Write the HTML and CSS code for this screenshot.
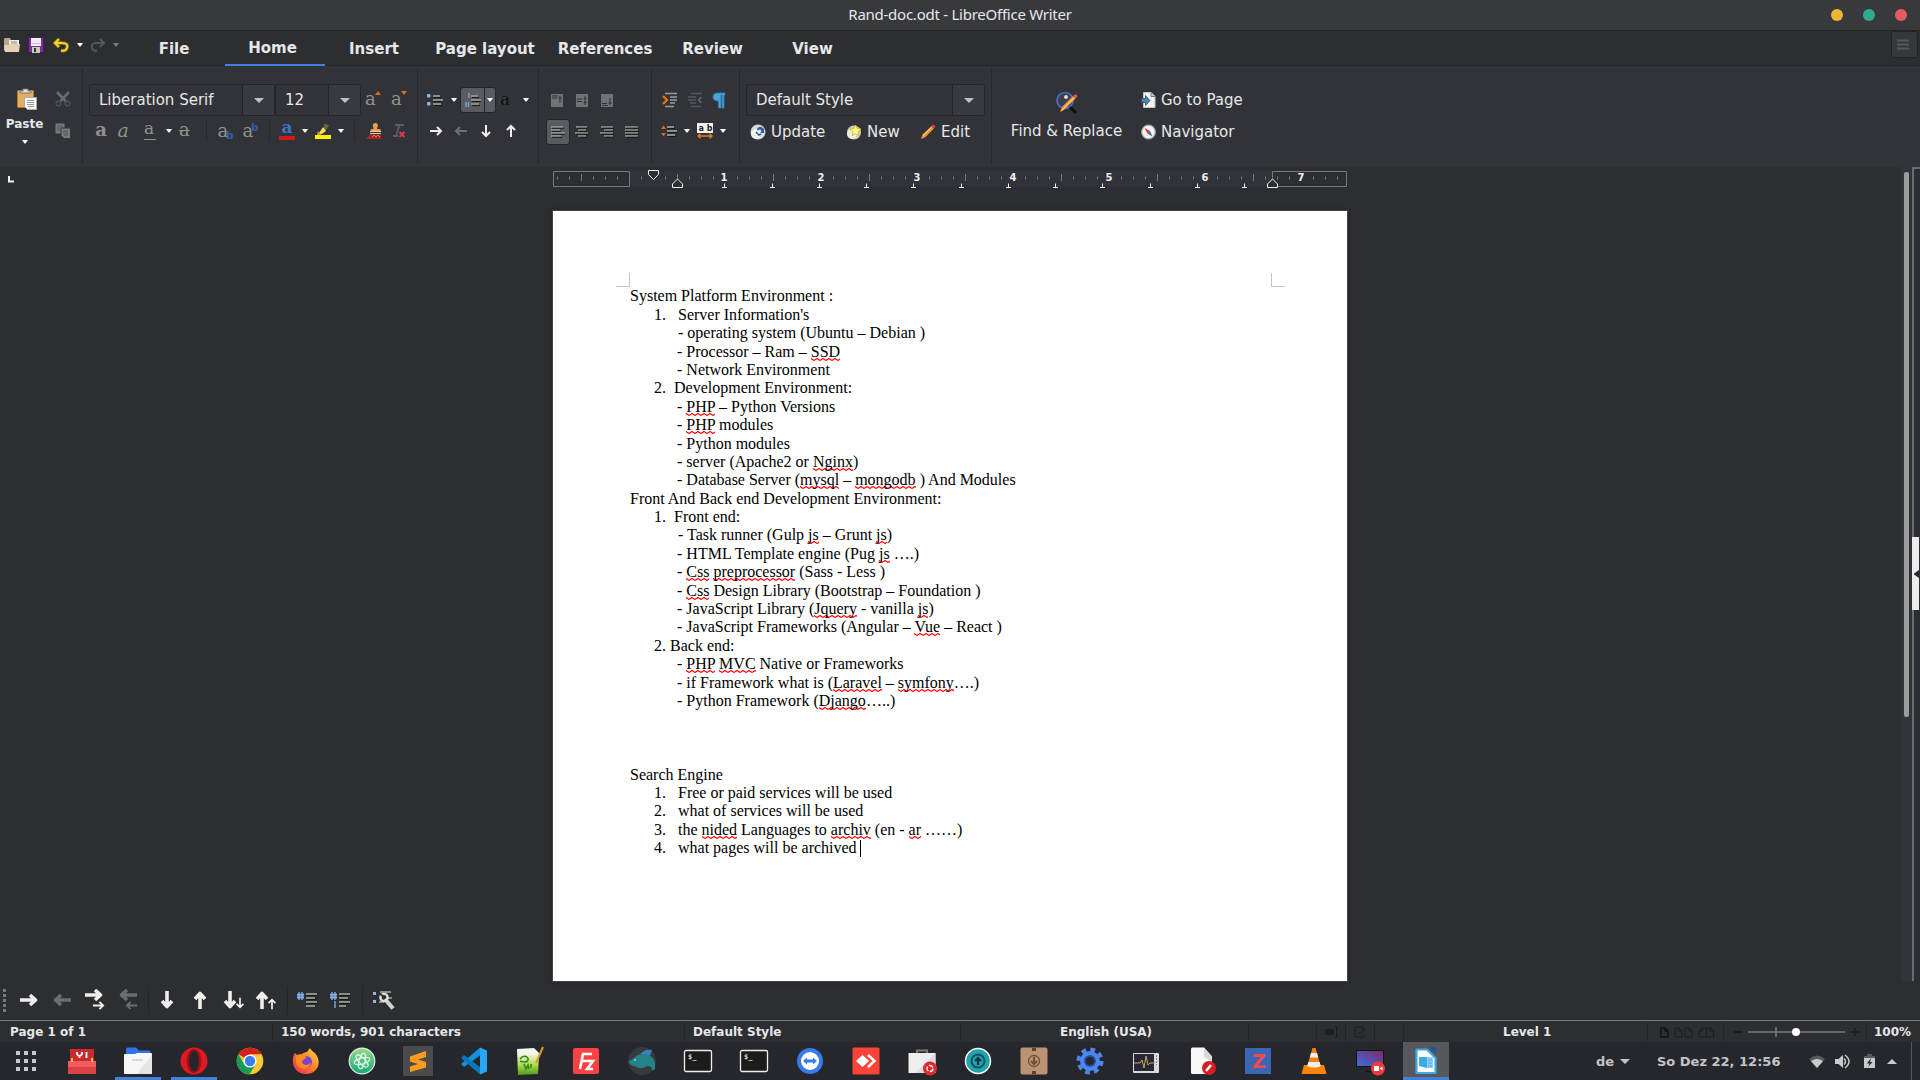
FILE: index.html
```html
<!DOCTYPE html>
<html lang="en">
<head>
<meta charset="utf-8">
<title>Rand-doc.odt - LibreOffice Writer</title>
<link rel="stylesheet" href="styles.css">
</head>
<body>
<svg class="defs" aria-hidden="true">
  <defs>
    <linearGradient id="wallpaper" x1="0" y1="1" x2="1" y2="0"><stop offset="0" stop-color="#3c6be0"/><stop offset="1" stop-color="#7d2a66"/></linearGradient>
    <linearGradient id="fox" x1="1" y1="0" x2="0" y2="1"><stop offset="0" stop-color="#ffe14a"/><stop offset=".5" stop-color="#ff7a2a"/><stop offset="1" stop-color="#e8255c"/></linearGradient>
    <linearGradient id="atomg" x1="0" y1="0" x2="0" y2="1"><stop offset="0" stop-color="#9bd98c"/><stop offset="1" stop-color="#17a877"/></linearGradient>
    <linearGradient id="grass" x1="0" y1="0" x2="0" y2="1"><stop offset=".2" stop-color="#f4f6f0"/><stop offset=".6" stop-color="#b7dc4e"/><stop offset="1" stop-color="#4c9b1e"/></linearGradient>
  </defs>
  <symbol id="caret" viewBox="0 0 6 4"><path d="M0 0h6L3.5 3.5h-1z" fill="#fff"/></symbol>
  <symbol id="caret-dim" viewBox="0 0 6 4"><path d="M0 0h6L3.5 3.5h-1z" fill="#77797c"/></symbol>
  <symbol id="arrow" viewBox="0 0 14 14"><path d="M1 7h11M8 3l4 4-4 4" fill="none" stroke="#eeeeec" stroke-width="2"/></symbol>
  <symbol id="bigarrow" viewBox="0 0 20 20"><path d="M1 10h15M11 5l5.500 5-5.500 5" fill="none" stroke="#eeeeec" stroke-width="3.600" stroke-linejoin="round"/></symbol>
  <symbol id="lines" viewBox="0 0 11 14"><path d="M1 3h7M1 7h10M1 11h8" stroke="#8b8f86" stroke-width="2"/><path d="M2 4.500h7M2 8.500h9M2 12.500h8" stroke="#17181a"/></symbol>
</svg>

<header class="titlebar">
  <span class="title-text">Rand-doc.odt - LibreOffice Writer</span>
  <div class="win-buttons"><i class="dot amber"></i><i class="dot green"></i><i class="dot red"></i></div>
</header>

<nav class="tabbar">
  <div class="quick">
    <svg width="18" height="16" viewBox="0 0 18 16"><path d="M1 2l1-1h5l1 2h8v11H1z" fill="#b9a68a"/><path d="M6 3h10v7H6z" fill="#eee"/><path d="M8 5h6M8 7h6" stroke="#888"/><path d="M1 8h5l1-1h10l-1 8H2z" fill="#e3d2b4"/></svg>
    <svg width="16" height="16" viewBox="0 0 16 16"><rect x=".5" y=".5" width="15" height="15" fill="#75348f" stroke="#4a1760"/><path d="M3 1h10v8H3z" fill="#f1edf3"/><path d="M4 10h8v6H4z" fill="#c5cbbf"/><path d="M6 11h2v4H6z" fill="#333"/><path d="M4 6.500h8" stroke="#c9b7d2"/></svg>
    <svg width="16" height="16" viewBox="0 0 16 16"><path d="M6 2L2 6l4 4M2 6h7c5 0 6 2 5 5s-4 3-6 2.500" fill="none" stroke="#8a6f00" stroke-width="3.500"/><path d="M6 2L2 6l4 4M2 6h7c5 0 6 2 5 5s-4 3-6 2.500" fill="none" stroke="#f3d530" stroke-width="1.900"/></svg>
    <svg width="6" height="4"><use href="#caret"/></svg>
    <svg width="16" height="16" viewBox="0 0 16 16"><path d="M10 2l4 4-4 4M14 6H7C2 6 1 8 2 11s3 3 5 2.500" fill="none" stroke="#55575a" stroke-width="2"/></svg>
    <svg width="6" height="4"><use href="#caret-dim"/></svg>
  </div>
  <a class="tab">File</a><a class="tab active">Home</a><a class="tab">Insert</a><a class="tab wide">Page layout</a><a class="tab wide">References</a><a class="tab review">Review</a><a class="tab view">View</a>
  <button class="hamburger"><svg width="12" height="11" viewBox="0 0 12 11"><path d="M0 1.500h12M0 5.500h12M0 9.500h12" stroke="#58585a" stroke-width="2"/></svg></button>
</nav>

<section class="ribbon">
  <div class="group clipboard">
    <div class="paste">
      <svg width="22" height="22" viewBox="0 0 22 22"><rect x="1.500" y="2.500" width="16" height="17" rx="1" fill="#e4ae60" stroke="#b27c2f"/><path d="M4 5h11V3h-3V1H7v2H4z" fill="#e3e5e1" stroke="#777"/><path d="M8.500 9.500h12v12h-9l-3-3z" fill="#fafafa" stroke="#aaa"/><path d="M11 12.500h7M11 14.500h7M11 16.500h7M12 18.500h6" stroke="#999"/></svg>
      <span>Paste</span>
      <svg width="6" height="4"><use href="#caret"/></svg>
    </div>
    <div class="clip-side">
      <svg width="16" height="16" viewBox="0 0 16 16"><path d="M2 1l8.500 9M14 1L5.500 10" stroke="#696b6e" stroke-width="2.600"/><circle cx="3.500" cy="12.500" r="2.300" fill="none" stroke="#505255" stroke-width="1.400"/><circle cx="12.500" cy="12.500" r="2.300" fill="none" stroke="#505255" stroke-width="1.400"/></svg>
      <svg width="16" height="16" viewBox="0 0 16 16"><path d="M.5.5h9v10h-9z" fill="#77797b"/><path d="M6 5h9.500v10.500H9L6 12.500z" fill="#77797b" stroke="#37383c"/><path d="M2 3h6M2 5h3M2 7h3M8 8h5M8 10h5M9 12h4" stroke="#55575a"/></svg>
    </div>
  </div>

  <div class="group fonts">
    <div class="row font-top">
      <div class="combo font-name"><span>Liberation Serif</span><b><i></i></b></div>
      <div class="combo font-size"><span>12</span><b><i></i></b></div>
      <span class="glyph">a<svg class="sup" width="6" height="4" viewBox="0 0 6 4"><path d="M0 4h6L3 0z" fill="#e06a14"/></svg></span>
      <span class="glyph">a<svg class="sup" width="6" height="4" viewBox="0 0 6 4"><path d="M0 0h6L3 4z" fill="#e06a14"/></svg></span>
    </div>
    <div class="row font-bottom">
      <span class="glyph heavy">a</span><span class="glyph slant">a</span><span class="glyph under">a</span>
      <svg width="6" height="4"><use href="#caret"/></svg>
      <span class="glyph strike">a</span><i class="sep"></i>
      <span class="glyph">a<small class="low">b</small></span><span class="glyph">a<small class="high">b</small></span><i class="sep"></i>
      <span class="glyph color-a">a</span>
      <svg width="6" height="4"><use href="#caret"/></svg>
      <svg width="16" height="16" viewBox="0 0 16 16"><path d="M9 1l5 1-2 4-3 2z" fill="#6b6a3b"/><path d="M8 4l3 4-4 3-4 .5z" fill="#f2dc62"/><path d="M3 8l3 4H2z" fill="#bda92a"/><path d="M0 12h16v4H0z" fill="#fff200"/></svg>
      <svg width="6" height="4"><use href="#caret"/></svg><i class="sep"></i>
      <svg width="16" height="16" viewBox="0 0 16 16"><path d="M9.500 0a2.500 2.500 0 012.500 2.500c0 1-1 1.500-1 3.500h3l1.500 3H4l1-3h2.500c0-2-.8-2.500-.8-3.500A2.700 2.700 0 019.500 0z" fill="#e5a04c"/><path d="M4 8.500h11M4 10.500h11" stroke="#e8c9a0"/><path d="M4 11.500h11V16H0z" fill="#b32222"/><path d="M6 14l2-2 2 2 2-2 2 2" fill="none" stroke="#e58a8a" stroke-width=".8"/></svg>
      <svg width="16" height="16" viewBox="0 0 16 16"><path d="M4 2h9M8.500 2L5 13M2 13h5" stroke="#5c5e61" stroke-width="1.800"/><path d="M8.500 9l5 5M13.500 9l-5 5" stroke="#dc3a4c" stroke-width="1.900"/></svg>
    </div>
  </div>

  <div class="group lists">
    <div class="row list-top">
      <svg width="16" height="14" viewBox="0 0 16 14"><rect y="1" width="3.500" height="3.500" rx="1" fill="#8db7ea"/><rect y="9" width="3.500" height="3.500" rx="1" fill="#8db7ea"/><use href="#lines" x="5" width="11" height="14"/></svg>
      <svg width="6" height="4"><use href="#caret"/></svg>
      <div class="split"><span><svg width="16" height="14" viewBox="0 0 16 14"><path d="M4 0v5M1 9v5M3.500 9v5" stroke="#79a5de" stroke-width="1.400"/><use href="#lines" x="5" width="11" height="14"/></svg></span><span><svg width="6" height="4"><use href="#caret"/></svg></span></div>
      <span class="glyph dark">a</span>
      <svg width="6" height="4"><use href="#caret"/></svg>
    </div>
    <div class="row list-bottom">
      <svg width="14" height="14"><use href="#arrow"/></svg><svg class="west dim" width="14" height="14"><use href="#arrow"/></svg><svg class="south" width="14" height="14"><use href="#arrow"/></svg><svg class="north" width="14" height="14"><use href="#arrow"/></svg>
    </div>
  </div>

  <div class="group align">
    <div class="row quad">
      <svg width="12" height="13" viewBox="0 0 12 13"><path d="M0 0h12v13H0z" fill="#707275"/><path d="M1 2h6M1 4h5M9 3v6M7.500 4.500L9 2.500l1.500 2" fill="none" stroke="#303236"/></svg>
      <svg width="12" height="13" viewBox="0 0 12 13"><path d="M0 0h12v13H0z" fill="#707275"/><path d="M1 5h5M1 7.500h5M9 2v9M7.500 4.500h3M7.500 8.500h3" fill="none" stroke="#303236"/></svg>
      <svg width="12" height="13" viewBox="0 0 12 13"><path d="M0 0h12v13H0z" fill="#707275"/><path d="M1 9.500h5M1 11.500h6M9 4v6M7.500 8.500L9 10.500l1.500-2" fill="none" stroke="#303236"/></svg>
    </div>
    <div class="row quad">
      <span class="pressed"><svg width="14" height="13" viewBox="0 0 14 13"><path d="M0 1h12M0 4h9M0 7h14M0 10h10" stroke="#a0a39b" stroke-width="1.500"/><path d="M1 2.300h12M1 5.300h9M1 8.300h13M1 11.300h10" stroke="#17181a"/></svg></span>
      <svg width="14" height="13" viewBox="0 0 14 13"><path d="M1 1h11M3 4h8M0 7h13M3 10h8" stroke="#9a9d95" stroke-width="1.500"/><path d="M2 2.300h11M4 5.300h8M1 8.300h13M4 11.300h8" stroke="#17181a"/></svg>
      <svg width="14" height="13" viewBox="0 0 14 13"><path d="M1 1h12M4 4h9M0 7h13M4 10h9" stroke="#9a9d95" stroke-width="1.500"/><path d="M2 2.300h12M5 5.300h9M1 8.300h13M5 11.300h9" stroke="#17181a"/></svg>
      <svg width="14" height="13" viewBox="0 0 14 13"><path d="M0 1h13M0 4h13M0 7h13M0 10h13" stroke="#9a9d95" stroke-width="1.500"/><path d="M1 2.300h13M1 5.300h13M1 8.300h13M1 11.300h13" stroke="#17181a"/></svg>
    </div>
  </div>

  <div class="group indent">
    <div class="row indent-top">
      <svg width="16" height="16" viewBox="0 0 16 16"><path d="M3 1.500h12M8 5h7M8 8h7M8 11h5M3 14.500h9" stroke="#9a9d95" stroke-width="1.500"/><path d="M1 4l4 4-4 4" fill="none" stroke="#e8700f" stroke-width="2.400"/></svg>
      <svg width="16" height="16" viewBox="0 0 16 16"><path d="M4 1.500h11M1 5h8M1 8h8M3 11h6M4 14.500h10" stroke="#56585b" stroke-width="1.500"/><path d="M14.500 5L11.500 8l3 3" fill="none" stroke="#696b6e" stroke-width="1.500"/></svg>
      <svg width="14" height="17" viewBox="0 0 14 17"><path d="M5 1h8v2h-1v13h-2V3H9v13H6.500V9C3 9 1 7.500 1 5s2-4 4-4z" fill="#4ba3d8" stroke="#2f7db5" stroke-width=".9"/></svg>
    </div>
    <div class="row indent-bottom">
      <svg width="16" height="14" viewBox="0 0 16 14"><path d="M0 5h5L2.500 1.500zM0 9h5L2.500 12.500z" fill="#d86a1c"/><use href="#lines" x="5" width="11" height="14"/></svg>
      <svg width="6" height="4"><use href="#caret"/></svg>
      <svg width="16" height="16" viewBox="0 0 16 16"><path d="M0 0h16v10H0z" fill="#f4f4f4"/><text x="1.500" y="8" class="ab">a b</text><path d="M1 13h14M3.500 10.800L1 13l2.500 2.200M12.500 10.800L15 13l-2.500 2.200" fill="none" stroke="#e37b1f" stroke-width="1.500"/></svg>
      <svg width="6" height="4"><use href="#caret"/></svg>
    </div>
  </div>

  <div class="group styles">
    <div class="combo style-name"><span>Default Style</span><b><i></i></b></div>
    <div class="row style-row">
      <span class="btn"><svg width="16" height="16" viewBox="0 0 16 16"><circle cx="8" cy="8" r="7.500" fill="#d8dad5"/><circle cx="6" cy="10" r="5" fill="#f2f3f0"/><path d="M7 5c2-3 5-3 6 0l1-1v5h-4l1.500-1.500C11 5 9 5 8 7z" fill="#2a5aa8"/><path d="M6 8l3 3 2-1" fill="none" stroke="#2a5aa8" stroke-width="1.500"/></svg>Update</span>
      <span class="btn"><svg width="16" height="16" viewBox="0 0 16 16"><circle cx="8" cy="8.500" r="7" fill="#c9cbc5"/><circle cx="6" cy="10" r="5" fill="#ecedea"/><path d="M9.500 1l1.700 3.500 3.800.5-2.800 2.700.7 3.800-3.400-1.800-3.400 1.800.7-3.800L4 5l3.800-.5z" fill="#fff6a0" stroke="#dfc400"/></svg>New</span>
      <span class="btn"><svg width="16" height="16" viewBox="0 0 16 16"><path d="M1 15l1.500-4.500L11.500 2l2.500 2.500L5 13.500z" fill="#ef9537"/><path d="M3 12L12 3" stroke="#ffd08c"/><path d="M11 2.500l2-2 2.500 2-2 2.500z" fill="#e2414c"/></svg>Edit</span>
    </div>
  </div>

  <div class="find">
    <svg width="22" height="24" viewBox="0 0 22 24"><circle cx="9" cy="9.500" r="8" fill="#3c4048" stroke="#4a6fc4" stroke-width="1.600"/><circle cx="10" cy="6" r="2" fill="#d5dae5"/><path d="M14 16l6 6" stroke="#0e0f10" stroke-width="3"/><path d="M4 21l2-5L17 5l2.500 2.500L8 19z" fill="#f09a3b"/><path d="M6 19L18 7" stroke="#ffd399"/><path d="M17 5l3-2 1.500 2-2 3z" fill="#e5525a"/></svg>
    <span>Find &amp; Replace</span>
  </div>
  <div class="goto">
    <span class="btn"><svg width="15" height="16" viewBox="0 0 15 16"><path d="M2.500.5H10l4 4v11H2.500z" fill="#f3f4f1" stroke="#c5c7c2"/><path d="M10 .5v4h4" fill="#ccc" stroke="#777"/><path d="M.5 6.500h4v-3L9 8.500l-4.500 5v-3h-4z" fill="#4c86ab" stroke="#24506f" stroke-width=".8"/></svg>Go to Page</span>
    <span class="btn"><svg width="15" height="16" viewBox="0 0 15 16"><circle cx="7.500" cy="8" r="6.800" fill="#f3f3f1" stroke="#aaaca7" stroke-width="1.200"/><path d="M3.500 4l5.500 3-2.500 2.500z" fill="#dc2c2c"/><path d="M11.500 12.500L9 7 6.500 9.500z" fill="#53659b"/></svg>Navigator</span>
  </div>
</section>

<main class="workspace">
  <div class="canvas">
    <svg class="ruler" width="1901" height="24" viewBox="0 167 1901 24">
      <path d="M9 176v5.500H14" fill="none" stroke="#f0f0f0" stroke-width="2"/>
      <path d="M630 171h642v16H630z" fill="#323338"/>
      <path d="M553.500 171.500h76v15h-76zM1272.500 171.500h74v15h-74z" fill="none" stroke="#77797d"/>
      <g fill="none" stroke="#77797d">
        <path d="M557 178h61" stroke-width="3" stroke-dasharray="1 11"/>
        <path d="M641 178h625" stroke-width="3" stroke-dasharray="1 11"/>
        <path d="M1277 178h62" stroke-width="3" stroke-dasharray="1 11"/>
        <path d="M581 177.500h1M677 177.500h1M773 177.500h1M869 177.500h1M965 177.500h1M1061 177.500h1M1157 177.500h1M1253 177.500h1" stroke-width="7"/>
      </g>
      <path d="M716 173h16v12h-16zM812 173h16v12h-16zM908 173h16v12h-16zM1004 173h16v12h-16zM1100 173h16v12h-16zM1196 173h16v12h-16z" fill="#323338"/>
      <path d="M1293 173h16v12h-16z" fill="#2d2e32"/>
      <g class="ruler-num"><text x="724" y="181">1</text><text x="821" y="181">2</text><text x="917" y="181">3</text><text x="1013" y="181">4</text><text x="1109" y="181">5</text><text x="1205" y="181">6</text><text x="1301" y="181">7</text></g>
      <path d="M722 187.500h5m-2.500 0v-4M770 187.500h5m-2.500 0v-4M817 187.500h5m-2.500 0v-4M864 187.500h5m-2.500 0v-4M911 187.500h5m-2.500 0v-4M959 187.500h5m-2.500 0v-4M1006 187.500h5m-2.500 0v-4M1053 187.500h5m-2.500 0v-4M1100 187.500h5m-2.500 0v-4M1148 187.500h5m-2.500 0v-4M1195 187.500h5m-2.500 0v-4M1242 187.500h5m-2.500 0v-4" stroke="#f0f0f0" fill="none"/>
      <path d="M648.500 170.500h10v4l-5 5-5-5zM672.500 187.500h10v-3.500l-5-5-5 5zM1267.500 187.500h10v-3.500l-5-5-5 5z" fill="#2d2e32" stroke="#f0f0f0"/>
    </svg>
    <article class="page">
      <div class="corners"><i class="c-left"></i><i class="c-right"></i></div>
      <p>System Platform Environment :</p>
      <p class="n"><b>1.</b>Server Information's</p>
      <p class="d first">- operating system (Ubuntu – Debian )</p>
      <p class="d">- Processor – Ram – <u>SSD</u></p>
      <p class="d">- Network Environment</p>
      <p class="n mid"><b>2.</b>Development Environment:</p>
      <p class="d">- <u>PHP</u> – Python Versions</p>
      <p class="d">- <u>PHP</u> modules</p>
      <p class="d">- Python modules</p>
      <p class="d">- server (Apache2 or <u>Nginx</u>)</p>
      <p class="d">- Database Server (<u>mysql</u> – <u>mongodb</u> ) And Modules</p>
      <p>Front And Back end Development Environment:</p>
      <p class="n mid"><b>1.</b>Front end:</p>
      <p class="d first">- Task runner (Gulp <u>js</u> – Grunt <u>js</u>)</p>
      <p class="d">- HTML Template engine (Pug <u>js</u> ….)</p>
      <p class="d">- <u>Css</u> <u>preprocessor</u> (Sass - Less )</p>
      <p class="d">- <u>Css</u> Design Library (Bootstrap – Foundation )</p>
      <p class="d">- JavaScript Library (<u>Jquery</u> - vanilla <u>js</u>)</p>
      <p class="d">- JavaScript Frameworks (Angular – <u>Vue</u> – React )</p>
      <p class="n near"><b>2.</b>Back end:</p>
      <p class="d">- <u>PHP</u> <u>MVC</u> Native or Frameworks</p>
      <p class="d">- if Framework what is (<u>Laravel</u> – <u>symfony</u>….)</p>
      <p class="d">- Python Framework (<u>Django</u>…..)</p>
      <p></p><p></p><p></p>
      <p>Search Engine</p>
      <p class="n"><b>1.</b>Free or paid services will be used</p>
      <p class="n"><b>2.</b>what of services will be used</p>
      <p class="n"><b>3.</b>the <u>nided</u> Languages to <u>archiv</u> (en - <u>ar</u> ……)</p>
      <p class="n"><b>4.</b>what pages will be archived <i class="cursor"></i></p>
    </article>
  </div>
  <div class="scroll"><i></i></div>
  <div class="sidebar-edge"><button><svg width="6" height="8" viewBox="0 0 6 8"><path d="M6 0v8L1 4.500v-1z" fill="#2b2c30"/></svg></button></div>
</main>

<section class="bullets-bar">
  <i class="grip"></i>
  <svg width="20" height="20"><use href="#bigarrow"/></svg>
  <svg class="west dim" width="20" height="20"><use href="#bigarrow"/></svg>
  <svg width="21" height="22" viewBox="0 0 21 22"><use href="#bigarrow" y="-4" width="20" height="20"/><use href="#arrow" x="8" y="10" width="13" height="13"/></svg>
  <svg class="dim" width="21" height="22" viewBox="0 0 21 22"><g transform="translate(21 0) scale(-1 1)"><use href="#bigarrow" y="-4" width="20" height="20"/><use href="#arrow" x="0" y="10" width="13" height="13"/></g></svg>
  <i class="bar-sep"></i>
  <svg class="south" width="20" height="20"><use href="#bigarrow"/></svg>
  <svg class="north" width="20" height="20"><use href="#bigarrow"/></svg>
  <svg width="22" height="22" viewBox="0 0 22 22"><g transform="rotate(90 11 11)"><use href="#bigarrow" x="1" y="5" width="20" height="20"/><use href="#arrow" x="8" y="-1" width="12" height="12"/></g></svg>
  <svg width="22" height="22" viewBox="0 0 22 22"><g transform="rotate(-90 11 11)"><use href="#bigarrow" x="1" y="-3" width="20" height="20"/><use href="#arrow" x="1" y="11" width="12" height="12"/></g></svg>
  <i class="bar-sep"></i>
  <svg width="20" height="16" viewBox="0 0 20 16"><path d="M0 2h7v4.500H0z" fill="#4a74ad"/><path d="M0 2.500h7M0 5.500h7M2 0v8M5 0v8" stroke="#8ab2e2" stroke-width="1.300"/><path d="M9 2h11M9 6h9M9 10h11M9 14h9" stroke="#8b8f86" stroke-width="1.800"/><path d="M10 3.500h10M10 7.500h9M10 11.500h10" stroke="#151617"/></svg>
  <svg width="20" height="16" viewBox="0 0 20 16"><path d="M0 2h7v4.500H0z" fill="#4a74ad"/><path d="M0 2.500h7M0 5.500h7M2 0v8M5 0v8M5 9v7" stroke="#8ab2e2" stroke-width="1.300"/><path d="M9 2h11M9 6h9M9 10h11M9 14h7" stroke="#8b8f86" stroke-width="1.800"/><path d="M10 3.500h10M10 7.500h9M10 11.500h10" stroke="#151617"/></svg>
  <i class="bar-sep"></i>
  <svg width="23" height="22" viewBox="0 0 23 22"><path d="M1 3h3v3H1zM1 11h3v3H1z" fill="#8db7ea"/><path d="M8 3h11M7 13h5M16 9h4" stroke="#8b8f86" stroke-width="1.800"/><path d="M13 10l8 9.500" stroke="#d0d2cd" stroke-width="4"/><circle cx="12" cy="8.500" r="3.600" fill="none" stroke="#dfe0dc" stroke-width="2.400"/><path d="M8 5l4.500 3" stroke="#2d2e32" stroke-width="2"/></svg>
</section>

<footer class="statusbar">
  <span class="s-page">Page 1 of 1</span><span class="s-words">150 words, 901 characters</span><span class="s-style">Default Style</span><span class="s-lang">English (USA)</span><span class="s-blank"></span>
  <span class="s-ico"><svg width="13" height="12" viewBox="0 0 13 12"><path d="M0 3h9v6H0z" fill="#1c1d20"/><path d="M9.500 1H13M11.500 1v10M9.500 11H13" stroke="#1c1d20"/></svg></span>
  <span class="s-ico"><svg width="12" height="12" viewBox="0 0 12 12"><path d="M9.500 5V1H1v10h8.500V9M4 6l2 2 5-5" fill="none" stroke="#1c1d20"/></svg></span>
  <span class="s-ico"></span>
  <span class="s-level">Level 1</span>
  <span class="s-views">
    <svg width="9" height="11" viewBox="0 0 9 11"><path d="M1 1h4l3 3v6H1zM5 1v3h3" fill="none" stroke="#111214" stroke-width="1.400"/></svg>
    <svg width="19" height="11" viewBox="0 0 19 11"><path d="M1 1h4l3 3v6H1zM5 1v3h3M11 1h4l3 3v6h-7zM15 1v3h3" fill="none" stroke="#1c1d20"/></svg>
    <svg width="17" height="11" viewBox="0 0 17 11"><path d="M8.500 1v9H1V4l3-3zM4 1v3H1M8.500 1h4l3 3v6h-7M12.500 1v3h3" fill="none" stroke="#1c1d20"/></svg>
  </span>
  <span class="s-zoom"><svg width="130" height="14" viewBox="0 0 130 14"><path d="M2 7h8M119 7h8M123 3v8" stroke="#1c1d20" stroke-width="2"/><path d="M16 7h97M44 2v10" stroke="#77797d" stroke-width="1.600"/><circle cx="64" cy="7" r="4" fill="#fff"/></svg></span>
  <span class="s-pct">100%</span>
</footer>

<footer class="taskbar">
  <div class="apps">
    <span class="app first"><svg viewBox="0 0 30 30"><path d="M5 7h4M13 7h4M21 7h4M5 15h4M13 15h4M21 15h4M5 23h4M13 23h4M21 23h4" stroke="#c6c8ca" stroke-width="4"/></svg></span>
    <span class="app"><svg viewBox="0 0 30 30"><path d="M3 3h24v13H3z" fill="#c92a2e"/><path d="M10 6v2q2.500 4 5 0V6M12.500 9v3M19.500 6v6" stroke="#fff" stroke-width="1.800" fill="none"/><path d="M1 15h28v13H1z" fill="#d94346"/><path d="M1 15h28v6H1z" fill="#f25c5e"/><path d="M5 12v4M25 12v4" stroke="#f4c430" stroke-width="2"/></svg></span>
    <span class="app run"><svg viewBox="0 0 30 30"><path d="M3 3q0-1.500 1.500-1.500H13l3 3h10q1.500 0 1.500 1.500v9H3z" fill="#2f74ea"/><path d="M1 9q0-1 1-1h10l2-1h14q1 0 1 1v19q0 1-1 1H2q-1 0-1-1z" fill="#f7f7f7"/><path d="M29 9v19H14z" fill="#e4e4e4"/><path d="M9 14h11" stroke="#bbb"/></svg></span>
    <span class="app run"><svg viewBox="0 0 30 30"><circle cx="15" cy="15" r="13.500" fill="#df1920"/><ellipse cx="15" cy="15" rx="7.500" ry="12" fill="#a80c14"/><ellipse cx="15" cy="15" rx="5" ry="10.500" fill="#26272c"/></svg></span>
    <span class="app"><svg viewBox="0 0 30 30"><circle cx="15" cy="15" r="13.300" fill="#fcc934"/><path d="M15 15L3.500 8.300A13.300 13.300 0 0126.500 8.300H15z" fill="#d51f1d"/><path d="M15 15l5.800 3.400-6.500 9.900A13.300 13.300 0 013.500 8.300l5.700 9.900z" fill="#149c55"/><circle cx="15" cy="15" r="6.600" fill="#fff"/><circle cx="15" cy="15" r="5.200" fill="#3b7ded"/></svg></span>
    <span class="app"><svg viewBox="0 0 30 30"><path d="M19 2c1 3 5 4 7 8 5 10-2 18-11 18C6 28 1 21 2 13c0-3 1-4 2-6l2 2 5-1c1-1 3-2 5-2z" fill="url(#fox)"/><circle cx="15" cy="16" r="6" fill="#7a43d6"/><path d="M6 9c5-1 7 1 10 2l-5 4c0 5 7 5 9 1 0 7-10 9-14 3-2-4-1-8 0-10z" fill="#ff8a1e"/></svg></span>
    <span class="app"><svg viewBox="0 0 30 30"><circle cx="15" cy="15" r="12.800" fill="url(#atomg)" stroke="#dfeee2" stroke-width="1.200"/><g fill="none" stroke="#e5fff0"><ellipse cx="15" cy="15" rx="8" ry="3" transform="rotate(-15 15 15)"/><ellipse cx="15" cy="15" rx="8" ry="3" transform="rotate(45 15 15)"/><ellipse cx="15" cy="15" rx="8" ry="3" transform="rotate(105 15 15)"/></g></svg></span>
    <span class="app"><svg viewBox="0 0 30 30"><rect width="30" height="30" rx="1" fill="#4b4b4b"/><path d="M7 10.500L23 5v6l-8 2.600 8 2.400v5.500L7 26v-5.500l8-2.500-8-2.500z" fill="#ff9a1f"/></svg></span>
    <span class="app"><svg viewBox="0 0 30 30"><path d="M21 1.500l7 3v21l-7 3z" fill="#29a6f4"/><path d="M21 1.500L2 18l3 3L21 9.500z" fill="#1391dc"/><path d="M21 28.500L2 12l3-3 16 12z" fill="#0877be"/></svg></span>
    <span class="app"><svg viewBox="0 0 30 30"><path d="M2 3l17-1 5 5-1 21-20 1z" fill="url(#grass)"/><path d="M5 13c4-5 9-2 8 1s-6 2-8 1M9 18l2 5 2-4 1 4M16 18v4" fill="none" stroke="#2f8a1c" stroke-width="1.600"/><path d="M28 1l-7 16" stroke="#e09a20" stroke-width="2"/></svg></span>
    <span class="app"><svg viewBox="0 0 30 30"><rect x="2" y="2" width="26" height="26" rx="2" fill="#fb4144"/><path d="M9 23l3-15h9M10.500 15H17M16 15h6l-6 8h6" fill="none" stroke="#fff" stroke-width="2.600"/></svg></span>
    <span class="app"><svg viewBox="0 0 30 30"><circle cx="15" cy="15" r="14" fill="#38393b"/><path d="M13 8c4-4 8-5 12-4l-2 6z" fill="#3a80c0"/><path d="M2 15c5-2 7-7 14-7 9 0 13 6 12 15l-3 2c1-4-2-5-5-5-4 3-9 3-12 0-3 0-6-2-6-5z" fill="#218489"/><circle cx="8" cy="14" r=".8" fill="#fff"/></svg></span>
    <span class="app"><svg viewBox="0 0 30 30"><rect x="1.500" y="4.500" width="27" height="21" rx="1.500" fill="#1b1b1b" stroke="#eee" stroke-width="1.300"/><text x="5" y="13" class="term-text">$_</text></svg></span>
    <span class="app"><svg viewBox="0 0 30 30"><rect x="1.500" y="4.500" width="27" height="21" rx="1.500" fill="#1b1b1b" stroke="#eee" stroke-width="1.300"/><text x="5" y="13" class="term-text">$_</text></svg></span>
    <span class="app"><svg viewBox="0 0 30 30"><circle cx="15" cy="15" r="13" fill="#377bed"/><circle cx="15" cy="15" r="9" fill="#fff"/><path d="M8 15l4-3.500v2h6v-2l4 3.500-4 3.500v-2h-6v2z" fill="#377bed"/></svg></span>
    <span class="app"><svg viewBox="0 0 30 30"><rect x="1.500" y="1.500" width="27" height="27" rx="1.500" fill="#fb4437"/><path d="M5 15l6.500-6 6.500 6-6.500 6z" fill="#fff"/><path d="M17 9l6.500 6-6.500 6" fill="none" stroke="#fff" stroke-width="2.500"/></svg></span>
    <span class="app"><svg viewBox="0 0 30 30"><path d="M10 8V4.500h10V8" fill="none" stroke="#77797c" stroke-width="2"/><path d="M1.500 7h27v20h-27z" fill="#eee"/><path d="M28.500 7v20h-20z" fill="#ddd"/><circle cx="23" cy="22.500" r="7" fill="#dd2a2d"/><circle cx="23" cy="22.500" r="3" fill="none" stroke="#fff" stroke-width="1.300" stroke-dasharray="4.800 1.500"/></svg></span>
    <span class="app"><svg viewBox="0 0 30 30"><circle cx="15" cy="15" r="12.500" fill="#1ea5aa" stroke="#fff" stroke-width="1.500"/><circle cx="15" cy="15" r="6.500" fill="none" stroke="#174c65" stroke-width="2"/><path d="M15 19v-6M12 15l3-3 3 3" fill="none" stroke="#102f52" stroke-width="2.200"/></svg></span>
    <span class="app"><svg viewBox="0 0 30 30"><rect x="1.500" y="1.500" width="27" height="27" rx="2" fill="#bd9272"/><path d="M13 2h4v3h-4zM13 25h4v3h-4z" fill="#5d4534"/><circle cx="15" cy="15" r="5.500" fill="none" stroke="#6e513d" stroke-width="1.300"/><path d="M15 11v6M12 15l3 3 3-3" fill="none" stroke="#6e513d" stroke-width="2"/></svg></span>
    <span class="app"><svg viewBox="0 0 30 30"><circle cx="15" cy="15" r="11" fill="none" stroke="#4d86ec" stroke-width="5" stroke-dasharray="4.600 4.040"/><circle cx="15" cy="15" r="7.500" fill="none" stroke="#4d86ec" stroke-width="5"/><circle cx="15" cy="15" r="5" fill="#26272c" stroke="#254f9c" stroke-width="2"/></svg></span>
    <span class="app"><svg viewBox="0 0 30 30"><rect x="2" y="7" width="26" height="20" rx="1" fill="#d9dadb"/><path d="M3 8h20v17H3z" fill="#2a2637"/><path d="M3 17h6l2-3 2 8 2-12 2 9 2-2h5" fill="none" stroke="#b8ae58"/><path d="M25.500 9v10" stroke="#888" stroke-dasharray="2 1"/></svg></span>
    <span class="app"><svg viewBox="0 0 30 30"><path d="M4 3q0-1.500 1.500-1.500H17l8 9V28H5.500Q4 28 4 26.500z" fill="#f8f8f8"/><path d="M17 1.500l8 9V16l-8-5z" fill="#d8d8d8"/><circle cx="22" cy="22" r="7" fill="#d51e22"/><path d="M19 25l5-6" stroke="#fff" stroke-width="2.500"/></svg></span>
    <span class="app"><svg viewBox="0 0 30 30"><rect x="2" y="2" width="26" height="26" fill="#3b66b2"/><text x="9" y="22" class="zed">Z</text></svg></span>
    <span class="app"><svg viewBox="0 0 30 30"><path d="M5 19h20l2.500 9h-25z" fill="#ff8400"/><path d="M13.500 2h3L22 21c-3 3-11 3-14 0z" fill="#f48213"/><path d="M12 7h6l1.300 4.500h-8.600zM9.400 16h11.200l1.200 4c-3 2-10 2-13.600 0z" fill="#eee"/></svg></span>
    <span class="app"><svg viewBox="0 0 30 30"><rect x="1.500" y="4.500" width="27" height="16" fill="url(#wallpaper)" stroke="#111214"/><path d="M10 25.500h10" stroke="#111214" stroke-width="1.500"/><circle cx="23" cy="22.500" r="7" fill="#f2383c"/><path d="M19 20h5v5h-5zM24.500 22.500l3-2v4z" fill="#fff"/></svg></span>
    <span class="app run current"><svg viewBox="0 0 30 30"><path d="M18 1h7v7z" fill="#2351a4"/><path d="M5.500 3.500H16l8.500 8.500v15h-19z" fill="#fff" stroke="#3eaae4" stroke-width="2.200" stroke-linejoin="round"/><path d="M8 11h8v11l-8-2z" fill="#3eaae4"/><path d="M16 11h6v11h-6z" fill="#8fd1f4"/><path d="M17 14h4M17 17h4M17 20h4" stroke="#3eaae4"/></svg></span>
  </div>
  <div class="tray">
    <span class="lang">de</span><svg class="lang-caret" width="10" height="5" viewBox="0 0 10 5"><path d="M0 0h10L5 5z" fill="#c4c5c7"/></svg>
    <span class="clock">So Dez 22, 12:56</span>
    <svg class="wifi" width="16" height="13" viewBox="0 0 16 13"><path d="M0 4Q8-3 16 4l-8 9z" fill="#57595d"/><path d="M2 6.300Q8 1.500 14 6.300L8 13z" fill="#c9cacc"/></svg>
    <svg class="vol" width="16" height="15" viewBox="0 0 16 15"><path d="M0 5h3.500L8 1v13L3.500 10H0z" fill="#c9cacc"/><path d="M9 4.500q3 3 0 6M10 1q8 6.500 0 13" fill="none" stroke="#c9cacc" stroke-width="1.500"/></svg>
    <svg class="bat" width="11" height="14" viewBox="0 0 11 14"><path d="M3 0h5v2h3v3H0V2h3z" fill="#57595d"/><path d="M0 4h11v10H0z" fill="#c9cacc"/><path d="M7 4L3 9.500h2.500L4 13l4.500-5H6z" fill="#26272c"/></svg>
    <svg class="up" width="10" height="5" viewBox="0 0 10 5"><path d="M0 5h10L5 0z" fill="#c9cacc"/></svg>
    <i class="edge"></i>
  </div>
</footer>
</body>
</html>
```
FILE: styles.css
```css
* { box-sizing: border-box; }
html, body { margin: 0; height: 100%; overflow: hidden; }
body {
  display: flex;
  flex-direction: column;
  width: 1920px;
  height: 1080px;
  background: #2d2e32;
  color: #e6e7e8;
  font: 15px "DejaVu Sans", sans-serif;
}
svg { display: block; flex: none; }
.defs { position: absolute; width: 0; height: 0; }
i { font-style: normal; }

/* title bar */
.titlebar {
  display: grid;
  grid-template-columns: 1fr auto 1fr;
  align-items: center;
  height: 31px;
  flex: none;
  background: #38393d;
  border-bottom: 1px solid #242528;
}
.title-text { grid-column: 2; font: 15px/28px "Noto Sans", sans-serif; height: 30px; letter-spacing: -.25px; white-space: nowrap; }
.win-buttons { display: flex; gap: 20px; justify-content: flex-end; padding-right: 13px; }
.dot { width: 12px; height: 12px; border-radius: 50%; }
.amber { background: #ebb635; }
.green { background: #2eaa8d; }
.red { background: #e65a61; }

/* notebookbar tabs */
.tabbar { display: flex; height: 35px; flex: none; background: #2d2e32; border-bottom: 1px solid #242528; }
.quick {
  display: grid;
  grid-template-columns: 24px 24px 26px 11px 25px 11px;
  align-items: center;
  justify-items: center;
  height: 28px;
  width: 125px;
  flex: none;
}
.tab { width: 100px; height: 35px; line-height: 36px; text-align: center; font-weight: bold; padding-right: 2px; flex: none; }
.tab.wide { width: 120px; padding: 0; }
.tab.review { width: 95px; padding: 0; }
.tab.view { width: 105px; padding: 0; }
.tab.active { border-bottom: 2px solid #3f7fe0; line-height: 34px; padding-right: 5px; }
.hamburger {
  margin: 0 2px 0 auto;
  width: 27px;
  height: 27px;
  padding: 0 0 0 5px;
  border: 1px solid #222326;
  border-radius: 3px;
  background: #35373b;
}

/* ribbon */
.ribbon { display: flex; height: 101px; flex: none; background: #323338; padding-top: 2px; }
.group {
  height: 96px;
  flex: none;
  padding: 16px 0 0 6px;
  border-right: 1px solid #27282b;
}
.row { display: grid; height: 32px; align-items: center; justify-items: center; }
.clipboard { width: 83px; display: flex; padding-left: 3px; }
.paste { width: 43px; display: flex; flex-direction: column; align-items: center; font-weight: bold; font-size: 12px; padding-top: 4px; }
.paste svg:first-child { margin-left: 4px; }
.paste span { margin: 6px 0 8px; line-height: 16px; }
.clip-side { width: 34px; display: flex; flex-direction: column; align-items: center; gap: 16px; padding-top: 7px; }
.fonts { width: 335px; }
.lists { width: 121px; padding-left: 5px; }
.align { width: 113px; }
.indent { width: 88px; }
.styles { width: 252px; }
.font-top { grid-template-columns: 186px 86px 26px 24px; justify-items: start; }
.font-top .glyph { margin: -2px 0 0 4px; }
.font-bottom { grid-template-columns: 24px 25px 24px 13px 24px 14px 25px 25px 13px 22px 14px 22px 14px 13px 26px 24px; height: 30px; }
.list-top { grid-template-columns: 24px 13px 36px 23px 13px; justify-content: start; }
.list-bottom { grid-template-columns: 25px 25px 25px 25px; justify-content: start; height: 30px; }
.quad { grid-template-columns: repeat(4, 25px); justify-content: start; }
.quad > svg { margin-right: 1px; }
.indent-top { grid-template-columns: 24px 26px 22px; justify-content: start; }
.indent-bottom { grid-template-columns: 22px 14px 22px 14px; justify-content: start; height: 30px; }
.style-row { grid-template-columns: 96px 74px 70px; justify-items: start; padding-left: 4px; }

.combo { display: flex; height: 32px; border: 1px solid #242528; border-radius: 3px; background: #323338; }
.combo span { flex: 1; padding-left: 9px; line-height: 30px; white-space: nowrap; }
.combo b { display: flex; align-items: center; justify-content: center; width: 32px; border-left: 1px solid #242528; background: #383a3f; }
.combo b i { border: 5px solid transparent; border-top-color: #c0c2c4; border-bottom: 0; }
.font-name { width: 186px; }
.font-size { width: 86px; }
.style-name { width: 239px; }

.glyph { position: relative; width: 16px; height: 18px; font: 18px/18px "DejaVu Serif", serif; color: #8f938b; }
.glyph.heavy { font-weight: bold; text-align: center; margin-top: -3px; }
.glyph.slant { font-style: italic; margin-top: -3px; font-size: 19px; }
.glyph.under { height: 17px; width: 12px; border-bottom: 1px solid #8f938b; line-height: 11px; font-size: 17px; }
.glyph.strike { text-decoration: line-through; text-decoration-thickness: 1px; margin-top: -3px; }
.glyph.dark { color: #141517; font-weight: bold; text-shadow: -1px 0 #55594f; font-size: 16px; }
.glyph.color-a { height: 17px; line-height: 9px; color: #3f74c4; font-weight: bold; font-size: 17px; border-bottom: 4px solid #cf1820; text-align: center; }
.sup { position: absolute; right: 0; top: 1px; }
.glyph small { position: absolute; right: 0; font: bold 10px "DejaVu Sans", sans-serif; color: #2f62ab; }
.low { top: 8px; }
.high { top: 0; }
.sep { width: 1px; height: 20px; background: #27282b; }
.split { display: flex; width: 36px; height: 26px; border: 1px solid #232427; border-radius: 3px; background: #595b60; }
.split span { display: flex; align-items: center; justify-content: center; width: 24px; }
.split span + span { width: 11px; border-left: 1px solid #232427; }
.pressed { display: flex; align-items: center; justify-content: center; width: 24px; height: 26px; border: 1px solid #232427; border-radius: 3px; background: #595b60; }
.west { transform: rotate(180deg); }
.south { transform: rotate(90deg); }
.north { transform: rotate(-90deg); }
.dim { opacity: .32; }
.ab { font: bold 8px "DejaVu Sans", sans-serif; fill: #222; }
.btn { display: flex; align-items: center; gap: 5px; white-space: nowrap; }
.find { width: 149px; display: flex; flex-direction: column; align-items: center; padding-top: 23px; flex: none; }
.find span { line-height: 20px; margin-top: 6px; white-space: nowrap; }
.goto { display: flex; flex-direction: column; padding-top: 16px; }
.goto .btn { height: 32px; }

/* document area */
.workspace { display: flex; height: 814px; flex: none; }
.canvas { width: 1901px; display: flex; flex-direction: column; flex: none; }
.ruler-num { font: bold 10px "DejaVu Sans", sans-serif; fill: #eee; text-anchor: middle; }
.page {
  width: 794px;
  height: 770px;
  margin: 20px 0 0 553px;
  padding: 62.4px 0 0 77px;
  background: #fff;
  box-shadow: 0 0 0 1px #434449, 0 0 5px #1e1f22;
  color: #000;
  font: 16px/18.4px "Liberation Serif", serif;
}
.corners { display: flex; justify-content: space-between; height: 14px; margin: 0 62px 0 -14px; }
.corners i { width: 14px; border-bottom: 1px solid #c4c4c4; }
.c-left { border-right: 1px solid #c4c4c4; }
.c-right { border-left: 1px solid #c4c4c4; }
.page p { margin: 0; height: 18.4px; white-space: pre; }
.n { padding-left: 24px; }
.n b { display: inline-block; width: 24px; font-weight: normal; }
.n.mid b { width: 20px; }
.n.near b { width: 16px; }
.d { padding-left: 47px; }
.d.first { padding-left: 48px; }
.page u {
  text-decoration: none;
  padding-bottom: 1px;
  background: url("data:image/svg+xml,%3Csvg xmlns='http://www.w3.org/2000/svg' width='6' height='3'%3E%3Cpath d='M-1 -.2L0 .6 3 2.400 6 .6 7 -.2' fill='none' stroke='%23f00' stroke-width='1.200'/%3E%3C/svg%3E") left bottom repeat-x;
}
.cursor { display: inline-block; width: 1px; height: 17px; margin-left: -1px; background: #000; vertical-align: -4px; }
.scroll { width: 11px; background: #323338; padding: 5px 0 0 3px; }
.scroll i { display: block; width: 5px; height: 545px; border-radius: 2px; background: #9c9d9f; }
.sidebar-edge { width: 8px; border-left: 2px solid #6b6c71; border-top: 2px solid #6b6c71; }
.sidebar-edge button { display: flex; align-items: center; width: 7px; height: 73px; margin: 368px 0 0 -2px; padding: 0 0 0 1px; border: 0; background: #ededed; }

/* bullets and numbering toolbar */
.bullets-bar {
  display: grid;
  grid-template-columns: 12px 33px 33px 33px 33px 9px 28px 38px 29px 36px 7px 31px 35px 11px 31px;
  align-items: center;
  justify-items: center;
  height: 39px;
  padding-bottom: 1px;
  flex: none;
}
.grip { width: 3px; height: 23px; background: repeating-linear-gradient(#77797d 0 3px, transparent 3px 5px); margin-right: 3px; }
.bar-sep { width: 1px; height: 29px; background: #242528; }

/* status bar */
.statusbar {
  display: flex;
  height: 22px;
  flex: none;
  border-top: 1px solid #77797d;
  font-weight: bold;
  font-size: 12px;
}
.statusbar > span { height: 18px; margin-top: 2px; line-height: 18px; border-right: 1px solid #232427; flex: none; white-space: nowrap; }
.s-page { width: 273px; padding-left: 10px; }
.s-words { width: 412px; padding-left: 8px; }
.s-style { width: 276px; padding-left: 8px; }
.s-lang { width: 288px; padding-left: 99px; }
.s-blank { width: 68px; }
.s-ico { width: 29px; display: flex; align-items: center; justify-content: center; }
.s-level { width: 244px; padding-left: 99px; }
.s-views { width: 76px; display: flex; align-items: center; gap: 5px; padding-left: 12px; }
.s-zoom { width: 143px; display: flex; align-items: center; padding-left: 8px; }
.statusbar > .s-pct { border: 0; padding-left: 7px; }

/* desktop panel */
.taskbar { display: flex; justify-content: space-between; height: 38px; flex: none; background: #26272c; }
.apps { display: flex; }
.app { display: flex; justify-content: center; width: 46px; height: 38px; margin: 0 5px; padding-top: 4px; }
.app.first { margin-left: 3px; }
.app svg { width: 30px; height: 30px; }
.app.run { border-bottom: 3px solid #4381d6; }
.app.current { background: #56585c; }
.term-text { font: bold 7px "DejaVu Sans Mono", monospace; fill: #ddd; }
.zed { font: bold 19px "DejaVu Sans", sans-serif; fill: #f2484c; }
.tray { display: flex; align-items: center; font-weight: bold; font-size: 13px; color: #c4c5c7; }
.lang-caret { margin: 1px 27px 0 6px; }
.clock { white-space: nowrap; width: 124px; }
.wifi { margin-left: 28px; }
.vol { margin-left: 10px; }
.bat { margin-left: 13px; }
.up { margin-left: 12px; }
.edge { width: 1px; height: 38px; margin: 0 8px 0 14px; background: #55575a; }
```
